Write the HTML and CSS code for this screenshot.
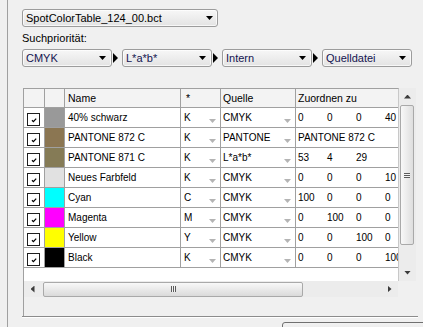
FILE: index.html
```html
<!DOCTYPE html>
<html lang="de">
<head>
  <meta charset="UTF-8" />
  <title>Schmuckfarben</title>
  <link rel="stylesheet" href="styles.css">
</head>
<body>
  <div class="window">
    <div class="grip"></div>
    <div class="pane">

      <div class="combo combo-file"><span>SpotColorTable_124_00.bct</span><i class="caret"></i></div>

      <div class="label">Suchpriorität:</div>
      <div class="priority">
        <div class="combo combo-prio"><span>CMYK</span><i class="caret"></i></div>
        <div class="next"><i></i></div>
        <div class="combo combo-prio"><span>L*a*b*</span><i class="caret"></i></div>
        <div class="next"><i></i></div>
        <div class="combo combo-prio"><span>Intern</span><i class="caret"></i></div>
        <div class="next"><i></i></div>
        <div class="combo combo-prio"><span>Quelldatei</span><i class="caret"></i></div>
      </div>

      <div class="gridbox">
        <div class="grid-main">
          <div class="grid-view">
            <div class="row head">
              <div class="c c-chk"></div>
              <div class="c c-sw"></div>
              <div class="c c-name">Name</div>
              <div class="c c-type">*</div>
              <div class="c c-src">Quelle</div>
              <div class="c c-map">Zuordnen zu</div>
            </div>

            <div class="row">
              <div class="c c-chk"><span class="box"><svg viewBox="0 0 11 11"><path d="M4 6.2 L5.4 7.6 L8.2 4.6"/></svg></span></div>
              <div class="c c-sw sw-40k"></div>
              <div class="c c-name">40% schwarz</div>
              <div class="c c-type"><span>K</span><i class="drop"></i></div>
              <div class="c c-src"><span>CMYK</span><i class="drop"></i></div>
              <div class="c c-map"><span class="v">0</span><span class="v">0</span><span class="v">0</span><span class="v">40</span></div>
            </div>

            <div class="row">
              <div class="c c-chk"><span class="box"><svg viewBox="0 0 11 11"><path d="M4 6.2 L5.4 7.6 L8.2 4.6"/></svg></span></div>
              <div class="c c-sw sw-872"></div>
              <div class="c c-name">PANTONE 872 C</div>
              <div class="c c-type"><span>K</span><i class="drop"></i></div>
              <div class="c c-src"><span>PANTONE</span><i class="drop"></i></div>
              <div class="c c-map"><span class="v">PANTONE 872 C</span></div>
            </div>

            <div class="row">
              <div class="c c-chk"><span class="box"><svg viewBox="0 0 11 11"><path d="M4 6.2 L5.4 7.6 L8.2 4.6"/></svg></span></div>
              <div class="c c-sw sw-871"></div>
              <div class="c c-name">PANTONE 871 C</div>
              <div class="c c-type"><span>K</span><i class="drop"></i></div>
              <div class="c c-src"><span>L*a*b*</span><i class="drop"></i></div>
              <div class="c c-map"><span class="v">53</span><span class="v">4</span><span class="v">29</span></div>
            </div>

            <div class="row">
              <div class="c c-chk"><span class="box"><svg viewBox="0 0 11 11"><path d="M4 6.2 L5.4 7.6 L8.2 4.6"/></svg></span></div>
              <div class="c c-sw sw-new"></div>
              <div class="c c-name">Neues Farbfeld</div>
              <div class="c c-type"><span>K</span><i class="drop"></i></div>
              <div class="c c-src"><span>CMYK</span><i class="drop"></i></div>
              <div class="c c-map"><span class="v">0</span><span class="v">0</span><span class="v">0</span><span class="v">10</span></div>
            </div>

            <div class="row">
              <div class="c c-chk"><span class="box"><svg viewBox="0 0 11 11"><path d="M4 6.2 L5.4 7.6 L8.2 4.6"/></svg></span></div>
              <div class="c c-sw sw-c"></div>
              <div class="c c-name">Cyan</div>
              <div class="c c-type"><span>C</span><i class="drop"></i></div>
              <div class="c c-src"><span>CMYK</span><i class="drop"></i></div>
              <div class="c c-map"><span class="v">100</span><span class="v">0</span><span class="v">0</span><span class="v">0</span></div>
            </div>

            <div class="row">
              <div class="c c-chk"><span class="box"><svg viewBox="0 0 11 11"><path d="M4 6.2 L5.4 7.6 L8.2 4.6"/></svg></span></div>
              <div class="c c-sw sw-m"></div>
              <div class="c c-name">Magenta</div>
              <div class="c c-type"><span>M</span><i class="drop"></i></div>
              <div class="c c-src"><span>CMYK</span><i class="drop"></i></div>
              <div class="c c-map"><span class="v">0</span><span class="v">100</span><span class="v">0</span><span class="v">0</span></div>
            </div>

            <div class="row">
              <div class="c c-chk"><span class="box"><svg viewBox="0 0 11 11"><path d="M4 6.2 L5.4 7.6 L8.2 4.6"/></svg></span></div>
              <div class="c c-sw sw-y"></div>
              <div class="c c-name">Yellow</div>
              <div class="c c-type"><span>Y</span><i class="drop"></i></div>
              <div class="c c-src"><span>CMYK</span><i class="drop"></i></div>
              <div class="c c-map"><span class="v">0</span><span class="v">0</span><span class="v">100</span><span class="v">0</span></div>
            </div>

            <div class="row">
              <div class="c c-chk"><span class="box"><svg viewBox="0 0 11 11"><path d="M4 6.2 L5.4 7.6 L8.2 4.6"/></svg></span></div>
              <div class="c c-sw sw-k"></div>
              <div class="c c-name">Black</div>
              <div class="c c-type"><span>K</span><i class="drop"></i></div>
              <div class="c c-src"><span>CMYK</span><i class="drop"></i></div>
              <div class="c c-map"><span class="v">0</span><span class="v">0</span><span class="v">0</span><span class="v">100</span></div>
            </div>
          </div>

          <div class="vscroll">
            <div class="sb-btn"><i class="arr-up"></i></div>
            <div class="vthumb"><i class="grip-h"></i></div>
            <div class="sb-track"></div>
            <div class="sb-btn"><i class="arr-down"></i></div>
          </div>
        </div>

        <div class="hscroll-row">
          <div class="hscroll">
            <div class="sb-btn-h"><i class="arr-left"></i></div>
            <div class="hthumb"><i class="grip-v"></i></div>
            <div class="sb-track"></div>
            <div class="sb-btn-h"><i class="arr-right"></i></div>
          </div>
          <div class="corner"></div>
        </div>
      </div>

      <div class="rule"></div>
      <div class="footer"><div class="button"></div></div>
    </div>
  </div>
</body>
</html>
```

FILE: styles.css
```css
* {
  box-sizing: border-box;
}

body {
  margin: 0;
  height: 327px;
  background: #f0f0f0;
  font-family: "Liberation Sans", Arial, sans-serif;
  font-size: 11px;
  color: #000;
  overflow: hidden;
}

.window {
  position: relative;
  height: 327px;
  margin-left: 7px;
  border-left: 1px solid #a0a0a0;
  padding: 9px 0 0 14px;
  overflow: hidden;
}

/* blue splitter grip on the left edge */
.grip {
  position: absolute;
  left: -8px;
  top: 268px;
  width: 7px;
  height: 27px;
  background: #4577cc;
  border: 1px solid #2d5aa6;
}

.grip::after {
  content: "";
  display: block;
  width: 1px;
  height: 23px;
  margin: 1px 0 0 2px;
  background: repeating-linear-gradient(#dbe6f7 0 1px, transparent 1px 3px);
}

.pane {
  width: 396px;
}

/* combo boxes */
.combo {
  display: flex;
  align-items: center;
  height: 18px;
  padding: 0 4px 0 3px;
  border: 1px solid #9c9c9c;
  border-radius: 3px;
  background: linear-gradient(#f7f7f7, #e3e3e3);
  box-shadow: inset 0 0 0 1px rgba(255, 255, 255, 0.7);
}

.combo span {
  flex: 1;
  white-space: nowrap;
  overflow: hidden;
}

.caret {
  width: 7px;
  height: 4px;
  background: #000;
  clip-path: polygon(0 0, 100% 0, 50% 100%);
}

.combo-file {
  width: 196px;
}

.combo-prio {
  width: 90px;
  padding-right: 5px;
}

.combo-prio span {
  color: #141450;
}

.label {
  margin-top: 5px;
  height: 13px;
  line-height: 13px;
}

.priority {
  display: flex;
  align-items: center;
  margin-top: 4px;
}

.next {
  width: 10px;
  padding-left: 1px;
}

.next i {
  display: block;
  width: 5px;
  height: 10px;
  background: #000;
  clip-path: polygon(0 0, 100% 50%, 0 100%);
}

/* grid control */
.gridbox {
  margin: 21px 0 0 1px;
  width: 393px;
  height: 228px;
  border-left: 1px solid #a0a0a0;
}

.grid-main {
  display: flex;
  height: 193px;
}

.grid-view {
  width: 375px;
  overflow: hidden;
  background: #fff;
  border-top: 1px solid #a0a0a0;
  border-right: 1px solid #c8c8c8;
}

.row {
  display: flex;
  height: 20px;
  border-bottom: 1px solid #a0a0a0;
  font-size: 10px;
}

.row.head {
  height: 19px;
  background: #f3f3f3;
  font-size: 10.5px;
}

.c {
  flex: none;
  display: flex;
  align-items: center;
  padding-left: 3px;
  border-right: 1px solid #a0a0a0;
  white-space: nowrap;
}

.c span {
  flex: 1;
}

.c-chk { width: 21px; }
.c-sw { width: 20px; }
.c-name { width: 116px; }
.c-type { width: 40px; }
.c-src { width: 75px; padding-left: 2px; }
.c-map { width: 130px; padding-left: 0; border-right: 0; }

.head .c-type { padding-left: 5px; }
.head .c-map { padding-left: 2px; }

.c-map .v {
  flex: none;
  width: 29px;
  padding-left: 2px;
}

.c-sw { padding: 0; }
.sw-40k { background: #999999; }
.sw-872 { background: #8b7652; }
.sw-871 { background: #857b56; }
.sw-new { background: #e1e1e1; }
.sw-c { background: #00ffff; }
.sw-m { background: #ff00ff; }
.sw-y { background: #ffff00; }
.sw-k { background: #000000; }

.box {
  flex: none !important;
  display: block;
  width: 13px;
  height: 13px;
  margin: 4px 0 0 0;
  border: 1px solid #1e1e1e;
  background: #fff;
}

.box svg {
  display: block;
  width: 11px;
  height: 11px;
}

.box path {
  fill: none;
  stroke: #000;
  stroke-width: 1.3;
}

.drop {
  flex: none;
  align-self: flex-end;
  width: 7px;
  height: 4px;
  margin: 0 4px 4px 0;
  background: #b4b4b4;
  clip-path: polygon(0 0, 100% 0, 50% 100%);
}

/* scrollbars */
.vscroll {
  display: flex;
  flex-direction: column;
  width: 17px;
  background: #ececec;
}

.sb-btn {
  height: 17px;
  display: flex;
  align-items: center;
  justify-content: center;
}

.sb-track {
  flex: 1;
}

.arr-up,
.arr-down {
  width: 7px;
  height: 4px;
  background: #3c3c3c;
}

.arr-up { clip-path: polygon(50% 0, 100% 100%, 0 100%); }
.arr-down { clip-path: polygon(0 0, 100% 0, 50% 100%); }

.vthumb {
  height: 140px;
  margin: 0 2px 0 1px;
  border: 1px solid #a9a9a9;
  border-radius: 2px;
  background: linear-gradient(90deg, #f8f8f8, #dedede);
  display: flex;
  align-items: center;
  justify-content: center;
}

.grip-h {
  width: 6px;
  height: 5px;
  background: repeating-linear-gradient(#5c5c5c 0 1px, #f4f4f4 1px 2px);
}

.hscroll-row {
  display: flex;
  height: 16px;
}

.hscroll {
  display: flex;
  align-items: center;
  width: 374px;
  background: #ececec;
}

.sb-btn-h {
  width: 17px;
  height: 16px;
  display: flex;
  align-items: center;
  justify-content: center;
}

.arr-left,
.arr-right {
  width: 4px;
  height: 7px;
  background: #3c3c3c;
}

.arr-left { clip-path: polygon(100% 0, 100% 100%, 0 50%); }
.arr-right { clip-path: polygon(0 0, 100% 50%, 0 100%); }

.hthumb {
  width: 260px;
  height: 15px;
  margin-left: 2px;
  border: 1px solid #a9a9a9;
  border-radius: 2px;
  background: linear-gradient(#f8f8f8, #dadada);
  display: flex;
  align-items: center;
  justify-content: center;
}

.grip-v {
  width: 5px;
  height: 6px;
  background: repeating-linear-gradient(90deg, #5c5c5c 0 1px, #f4f4f4 1px 2px);
}

.corner {
  flex: 1;
  background: #f0f0f0;
}

.rule {
  border-top: 1px solid #8c8c8c;
  border-bottom: 1px solid #fff;
}

.footer {
  padding: 4px 0 0 260px;
}

.button {
  width: 160px;
  height: 22px;
  border: 1px solid #707070;
  border-radius: 3px;
  background: linear-gradient(#f2f2f2, #dcdcdc);
}
```
